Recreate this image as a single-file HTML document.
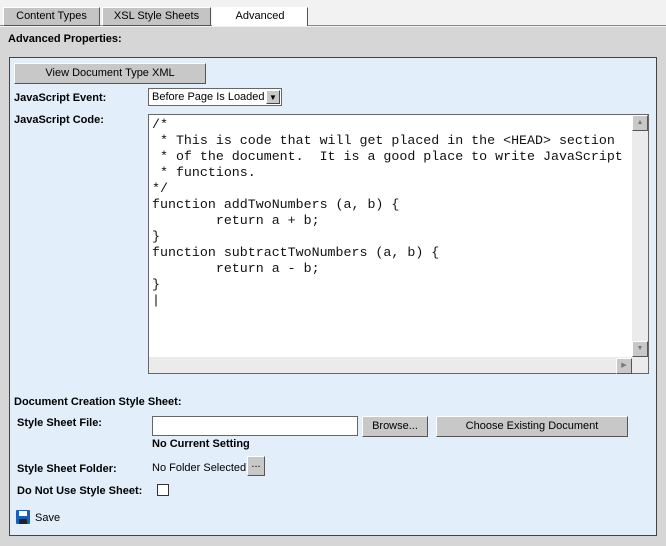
<!DOCTYPE html>
<html><head><style>
body{margin:0;width:666px;height:546px;background:#d6d6d6;font-family:"Liberation Sans",sans-serif;font-size:11px;position:relative;overflow:hidden}
.a{position:absolute}
.tab{position:absolute;top:7px;height:17px;border:1px solid #555;border-top-color:#fff;border-left-color:#fff;background:#c4c4c4;text-align:center;line-height:17px;font-size:11px}
.btn{position:absolute;background:#c8c8c8;border:1px solid;border-color:#fff #555 #555 #fff;text-align:center;font-size:11px}
pre{margin:0;font-family:"Liberation Mono",monospace;font-size:13.3px;line-height:16px;color:#111}
</style></head><body>
<div class="a" style="left:0;top:0;width:666px;height:27px;background:#f2f2f2"></div>
<div class="a" style="left:0;top:25px;width:666px;height:1px;background:#888"></div>
<div class="tab" style="left:3px;width:95px">Content Types</div>
<div class="tab" style="left:102px;width:107px">XSL Style Sheets</div>
<div class="tab" style="left:212px;width:94px;background:#fff;height:18px;border-bottom:none">Advanced</div>
<div class="a" style="left:8px;top:33px;font-weight:bold;font-size:11px">Advanced Properties:</div>
<div class="a" style="left:9px;top:57px;width:646px;height:477px;background:#e2eefa;border:1px solid #444"></div>
<div class="btn" style="left:14px;top:63px;width:190px;height:19px;line-height:19px">View Document Type XML</div>
<div class="a" style="left:14px;top:92px;font-weight:bold">JavaScript Event:</div>
<div class="a" style="left:148px;top:88px;width:134px;height:18px;background:#fff;border:1px solid #666;box-sizing:border-box;line-height:17px;padding-left:3px">Before Page Is Loaded</div>
<div class="a" style="left:266px;top:90px;width:14px;height:14px;background:#c8c8c8;border:1px solid;border-color:#fff #444 #444 #fff;box-sizing:border-box;font-size:8px;text-align:center;line-height:13px">▼</div>
<div class="a" style="left:14px;top:114px;font-weight:bold">JavaScript Code:</div>
<div class="a" style="left:148px;top:114px;width:501px;height:260px;background:#fff;border:1px solid #666;box-sizing:border-box"></div>
<div class="a" style="left:632px;top:115px;width:16px;height:243px;background:#ebebeb"></div>
<div class="a" style="left:149px;top:357px;width:499px;height:16px;background:#ebebeb"></div>
<div class="btn" style="left:632px;top:115px;width:14px;height:14px;font-size:7px;line-height:14px;color:#777">▲</div>
<div class="btn" style="left:632px;top:341px;width:14px;height:14px;font-size:7px;line-height:14px;color:#777">▼</div>
<div class="btn" style="left:616px;top:358px;width:14px;height:14px;font-size:7px;line-height:14px;color:#777">▶</div>
<pre class="a" style="left:152px;top:117px">/*
 * This is code that will get placed in the &lt;HEAD&gt; section
 * of the document.  It is a good place to write JavaScript
 * functions.
*/
function addTwoNumbers (a, b) {
        return a + b;
}
function subtractTwoNumbers (a, b) {
        return a - b;
}
|</pre>
<div class="a" style="left:14px;top:396px;font-weight:bold">Document Creation Style Sheet:</div>
<div class="a" style="left:17px;top:417px;font-weight:bold">Style Sheet File:</div>
<div class="a" style="left:152px;top:416px;width:206px;height:20px;background:#fff;border:1px solid #666;box-sizing:border-box"></div>
<div class="btn" style="left:362px;top:416px;width:64px;height:19px;line-height:19px">Browse...</div>
<div class="btn" style="left:436px;top:416px;width:190px;height:19px;line-height:19px">Choose Existing Document</div>
<div class="a" style="left:152px;top:438px;font-weight:bold">No Current Setting</div>
<div class="a" style="left:17px;top:463px;font-weight:bold">Style Sheet Folder:</div>
<div class="a" style="left:152px;top:462px">No Folder Selected</div>
<div class="btn" style="left:247px;top:456px;width:16px;height:18px;line-height:14px">...</div>
<div class="a" style="left:17px;top:485px;font-weight:bold">Do Not Use Style Sheet:</div>
<div class="a" style="left:157px;top:484px;width:12px;height:12px;background:#fff;border:1px solid #333;box-sizing:border-box"></div>
<svg class="a" style="left:16px;top:510px" width="14" height="14" viewBox="0 0 14 14"><rect width="14" height="14" rx="1" fill="#1a5fb4"/><rect x="3" y="1" width="8" height="5" fill="#fff"/><rect x="3" y="9" width="8" height="5" fill="#222"/></svg>
<div class="a" style="left:35px;top:512px">Save</div>
</body></html>
